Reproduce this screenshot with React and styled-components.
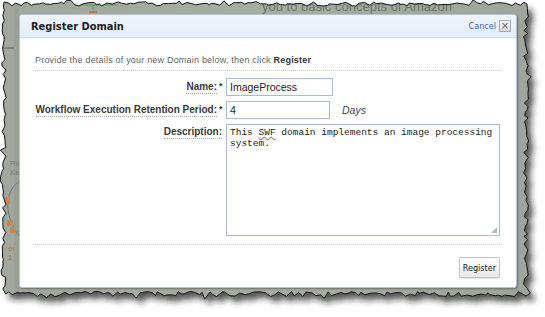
import React from 'react'
import styled, { createGlobalStyle } from 'styled-components'

const GlobalStyle = createGlobalStyle`
	html, body {
		margin: 0;
		padding: 0;
		background: #ffffff;
	}
	body {
		font-family: 'Liberation Sans', Arial, sans-serif;
	}
`

// seeded random so the torn edge is the same on every render
const rng = (seed) => {
	let s = seed
	return () => {
		s = (s * 16807) % 2147483647
		return s / 2147483647
	}
}

const tornPath = () => {
	const r = rng(42)
	const pts = []
	const L = 4, T = 4, R = 526, B = 294
	for (let x = L; x < R; x += 2 + r() * 4) pts.push([x, T + (r() - 0.5) * 4 - (r() > 0.85 ? 2 : 0)])
	for (let y = T; y < B; y += 2 + r() * 4) pts.push([R + (r() - 0.5) * 5 + (r() > 0.85 ? 3 : 0), y])
	for (let x = R; x > L; x -= 2 + r() * 4) pts.push([x, B + (r() - 0.5) * 5 + (r() > 0.85 ? 3 : 0)])
	for (let y = B; y > T; y -= 2 + r() * 4) pts.push([L + (r() - 0.5) * 4 - (r() > 0.85 ? 2 : 0), y])
	return 'M' + pts.map(([x, y]) => `${x.toFixed(1)},${y.toFixed(1)}`).join(' L') + ' Z'
}

const TORN = tornPath()

const Backdrop = () => (
	<BackdropSvg width="545" height="317" viewBox="0 0 545 317">
		<defs>
			<filter id="torn-shadow" x="-5%" y="-5%" width="115%" height="120%">
				<feDropShadow dx="5" dy="6" stdDeviation="3" floodColor="#1a1a1a" floodOpacity="0.75" />
			</filter>
			<clipPath id="torn-clip">
				<path d={TORN} />
			</clipPath>
			<linearGradient id="page-grey" x1="0" y1="0" x2="1" y2="0">
				<stop offset="0" stopColor="#a1a79d" />
				<stop offset="0.5" stopColor="#a8ada4" />
				<stop offset="1" stopColor="#9fa59b" />
			</linearGradient>
		</defs>
		<path d={TORN} fill="url(#page-grey)" filter="url(#torn-shadow)" />
		<g clipPath="url(#torn-clip)">
			<text x="262" y="11" fontFamily="Liberation Sans, Arial, sans-serif" fontSize="13" fill="#6e736b">
				you to basic concepts of Amazon
			</text>
			<path d="M78 5 H118 M93 5 V10" stroke="#4f9a5c" strokeWidth="1" fill="none" />
			<rect x="89" y="11" width="8" height="2" fill="#c07a3c" />
			<path d="M0 48 H19" stroke="#5c605a" strokeWidth="1" />
			<rect x="14" y="4" width="5" height="292" fill="#9a9f97" />
			<text x="10" y="166" fontFamily="Liberation Sans, Arial, sans-serif" fontSize="8" fill="#7b8078">Re</text>
			<text x="10" y="175" fontFamily="Liberation Sans, Arial, sans-serif" fontSize="8" fill="#7b8078">Ke</text>
			<path d="M19 182 C6 190 2 212 19 236" stroke="#6d7782" strokeWidth="1" fill="none" />
			<rect x="5" y="197" width="5" height="7" fill="#c58a52" />
			<rect x="7" y="220" width="6" height="6" fill="#c58a52" />
			<rect x="10" y="227" width="6" height="6" fill="#c58a52" />
			<text x="8" y="251" fontFamily="Liberation Sans, Arial, sans-serif" fontSize="8" fill="#b07a4a">er</text>
			<text x="8" y="260" fontFamily="Liberation Sans, Arial, sans-serif" fontSize="8" fill="#b07a4a">1</text>
		</g>
		<path d={TORN} fill="none" stroke="#111" strokeWidth="1" />
	</BackdropSvg>
)

const FormRow = ({ label, children, top }) => (
	<>
		<LabelCell $top={top}>
			<Label>{label}</Label>
			{top ? null : <Required>*</Required>}
		</LabelCell>
		<FieldCell>{children}</FieldCell>
	</>
)

const App = () => {
	return (
		<>
			<GlobalStyle />
			<Stage>
				<Backdrop />
				<Dialog>
					<Header>
						<Title>Register Domain</Title>
						<HeaderActions>
							<CancelLink href="#">Cancel</CancelLink>
							<CloseBox>×</CloseBox>
						</HeaderActions>
					</Header>
					<Body>
						<Intro>
							Provide the details of your new Domain below, then click <b>Register</b>
						</Intro>
						<Form>
							<FormRow label="Name:">
								<TextInput $width={107}>ImageProcess</TextInput>
							</FormRow>
							<FormRow label="Workflow Execution Retention Period:">
								<TextInput $width={104}>4</TextInput>
								<Unit>Days</Unit>
							</FormRow>
							<FormRow label="Description:" top>
								<TextArea>
									<span>This </span>
									<Misspelled>SWF</Misspelled>
									<span> domain implements an image processing</span>
									<br />
									<span>system.</span>
									<Grip />
								</TextArea>
							</FormRow>
						</Form>
						<Footer>
							<Button>Register</Button>
						</Footer>
					</Body>
				</Dialog>
			</Stage>
		</>
	)
}

const Stage = styled.div`
	position: relative;
	width: 545px;
	height: 317px;
	padding: 14px 0 0 19px;
	box-sizing: border-box;
	overflow: hidden;
`

const BackdropSvg = styled.svg`
	position: absolute;
	left: 0;
	top: 0;
`

const Dialog = styled.div`
	position: relative;
	width: 498px;
	height: 274px;
	box-sizing: border-box;
	background: #ffffff;
	border: 1px solid #b4c4d8;
	border-radius: 3px;
	box-shadow: 1px 1px 2px rgba(0, 0, 0, 0.35);
	display: flex;
	flex-direction: column;
`

const Header = styled.div`
	height: 22px;
	display: flex;
	align-items: center;
	justify-content: space-between;
	padding: 0 5px 0 11px;
	background: linear-gradient(#eef4fc, #e4edf8);
	border-bottom: 1px solid #cddcee;
	border-radius: 3px 3px 0 0;
`

const Title = styled.div`
	font-family: 'DejaVu Sans Condensed', 'DejaVu Sans', sans-serif;
	font-weight: bold;
	font-size: 11px;
	color: #222;
`

const HeaderActions = styled.div`
	display: flex;
	align-items: center;
	gap: 3px;
`

const CancelLink = styled.a`
	font-family: 'DejaVu Sans Condensed', 'DejaVu Sans', sans-serif;
	font-size: 9px;
	color: #3b6aa8;
	text-decoration: none;
`

const CloseBox = styled.span`
	width: 10px;
	height: 10px;
	border: 1px solid #a8adb3;
	background: linear-gradient(#f4f4f4, #d9dbde);
	color: #666;
	font-size: 10px;
	line-height: 9px;
	text-align: center;
	font-family: 'DejaVu Sans', sans-serif;
`

const Body = styled.div`
	flex: 1;
	padding: 17px 16px 0 15px;
	display: flex;
	flex-direction: column;
`

const Intro = styled.div`
	font-size: 9px;
	letter-spacing: 0.2px;
	color: #666;
	padding-bottom: 5px;
	border-bottom: 1px dotted #c8c8c8;

	b {
		color: #333;
	}
`

const Form = styled.div`
	display: grid;
	grid-template-columns: 188px 1fr;
	column-gap: 3px;
	row-gap: 5px;
	padding: 7px 0 8px;
	border-bottom: 1px dotted #c8c8c8;
`

const LabelCell = styled.div`
	display: flex;
	justify-content: flex-end;
	align-items: ${(p) => (p.$top ? 'flex-start' : 'center')};
	gap: 2px;
	padding-top: ${(p) => (p.$top ? '2px' : '0')};
	padding-right: ${(p) => (p.$top ? '1px' : '0')};
	white-space: nowrap;
`

const Label = styled.span`
	font-family: 'Liberation Sans', Arial, sans-serif;
	font-weight: bold;
	font-size: 10px;
	color: #3a3a3a;
	border-bottom: 1px dotted #aaa;
	line-height: 12px;
`

const Required = styled.span`
	font-family: 'Liberation Sans', Arial, sans-serif;
	font-size: 9px;
	font-weight: bold;
	color: #333;
	align-self: flex-start;
	margin-top: 3px;
	width: 4px;
`

const FieldCell = styled.div`
	display: flex;
	align-items: center;
	gap: 12px;
`

const TextInput = styled.div`
	width: ${(p) => p.$width}px;
	height: 18px;
	box-sizing: border-box;
	border: 1px solid #a8bcd4;
	padding: 0 3px;
	font-size: 10.5px;
	line-height: 16px;
	color: #222;
	background: #fff;
`

const Unit = styled.span`
	font-style: italic;
	font-size: 10.5px;
	color: #444;
`

const TextArea = styled.div`
	position: relative;
	width: 274px;
	height: 112px;
	box-sizing: border-box;
	border: 1px solid #a8bcd4;
	padding: 2px 3px;
	font-family: 'Liberation Mono', 'Courier New', monospace;
	font-size: 9.5px;
	line-height: 11px;
	color: #222;
	white-space: pre;
`

const Misspelled = styled.span`
	text-decoration: underline wavy #e03030;
	text-decoration-thickness: 1px;
	text-underline-offset: 1px;
`

const Grip = styled.span`
	position: absolute;
	right: 2px;
	bottom: 2px;
	width: 6px;
	height: 6px;
	background-image: radial-gradient(circle, #b0b6bd 0.8px, transparent 1px);
	background-size: 2px 2px;
	clip-path: polygon(100% 0, 100% 100%, 0 100%);
`

const Footer = styled.div`
	display: flex;
	justify-content: flex-end;
	padding-top: 12px;
`

const Button = styled.button`
	height: 21px;
	padding: 0 3px;
	border: 1px solid #c2c2c2;
	border-radius: 2px;
	background: linear-gradient(#ffffff, #e9e9e9);
	font-family: 'DejaVu Sans Condensed', 'DejaVu Sans', sans-serif;
	font-size: 9px;
	color: #222;
	box-shadow: 0 1px 1px rgba(0, 0, 0, 0.1);
`

export default App
